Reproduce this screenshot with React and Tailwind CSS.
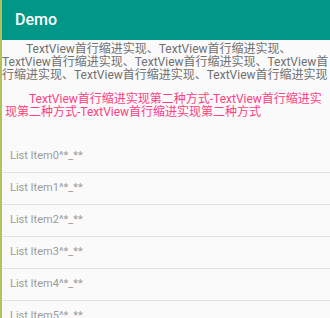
export default function App() {
  const items = [0, 1, 2, 3, 4, 5];
  return (
    <div
      className="h-[318px] w-[330px] overflow-hidden border-l-2 border-[#b2c25a] bg-[#fafafa] flex flex-col"
      style={{ fontFamily: "Roboto, 'Noto Sans CJK SC', sans-serif" }}
    >
      <div className="h-[40px] shrink-0 bg-[#009688] flex items-center pl-[13px]">
        <span className="text-[16px] font-medium text-white">Demo</span>
      </div>
      <p className="mt-[3px] text-[12px] leading-[13px] text-[#707070] indent-[24px]">
        TextView首行缩进实现、TextView首行缩进实现、TextView首行缩进实现、TextView首行缩进实现、TextView首行缩进实现、TextView首行缩进实现、TextView首行缩进实现
      </p>
      <p className="mt-[11px] pl-[3px] pr-[5px] text-[12px] leading-[13px] text-[#ff4081] indent-[24px]">
        TextView首行缩进实现第二种方式-TextView首行缩进实<br />现第二种方式-TextView首行缩进实现第二种方式
      </p>
      <div className="mt-[22px] flex flex-col">
        {items.map((i) => (
          <div
            key={i}
            className="h-[32px] shrink-0 border-b border-[#e2e2e2] flex items-center pl-[8px] text-[11px] text-[#9a9a9a]"
          >
            List Item{i}^*_**
          </div>
        ))}
      </div>
    </div>
  );
}
